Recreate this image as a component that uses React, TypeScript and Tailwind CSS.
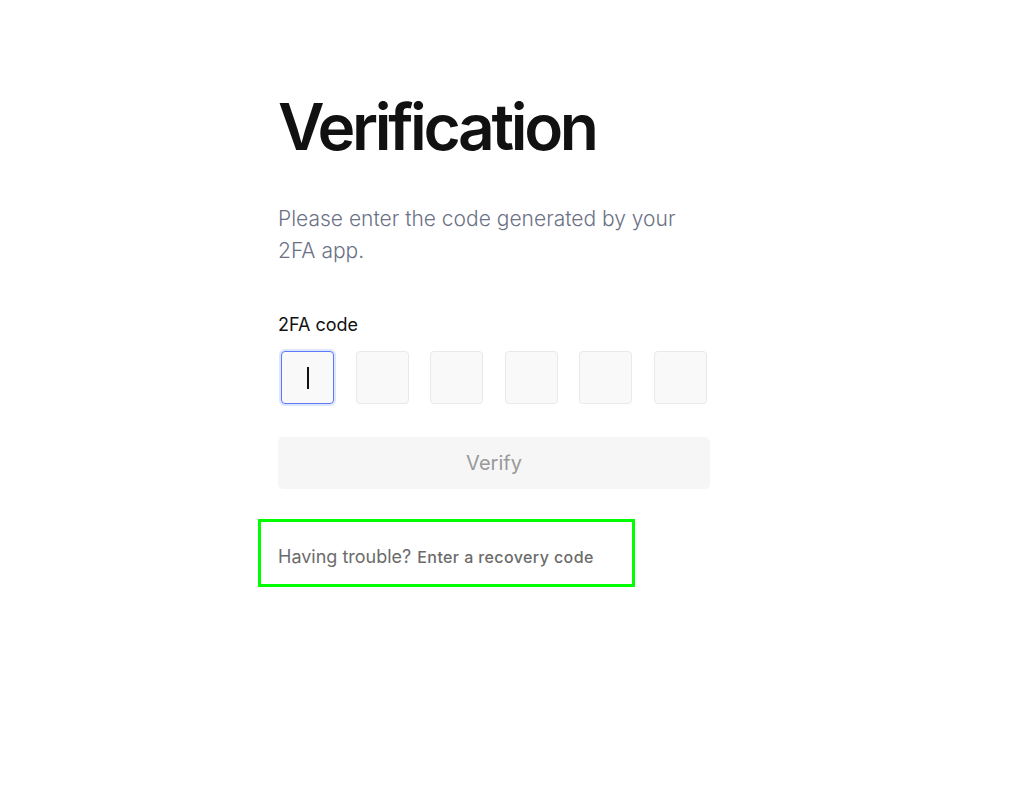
import React from "react";

const inter = { fontFamily: "Inter, 'Noto Sans', sans-serif" };

const CodeBox = ({ active }: { active?: boolean }) => (
  <div
    className={
      active
        ? "w-[53px] h-[53px] rounded-[4px] bg-[#f9f9f9] border border-[#5b7bf8] ring-2 ring-[#5b7bf8]/20 flex items-center justify-center"
        : "w-[53px] h-[53px] rounded-[4px] bg-[#f9f9f9] border border-[#e9e9e9]"
    }
  >
    {active && <span className="block w-[2px] h-[22px] bg-[#111]" />}
  </div>
);

const App: React.FC = () => {
  return (
    <div className="min-h-[790px] bg-white" style={inter}>
      <div className="ml-[278px] w-[432px] pt-[95px]">
        <h1 className="text-[64px] leading-[64px] font-semibold tracking-[-0.052em] text-[#111]">
          Verification
        </h1>
        <p className="mt-[44px] text-[21px] leading-[32px] font-light text-[#6b7285]">
          Please enter the code generated by your 2FA app.
        </p>
        <label className="block mt-[44px] text-[18px] leading-[28px] text-[#111]">
          2FA code
        </label>
        <div className="mt-[12px] flex justify-between px-[3px]">
          <CodeBox active />
          <CodeBox />
          <CodeBox />
          <CodeBox />
          <CodeBox />
          <CodeBox />
        </div>
        <button className="mt-[33px] w-full h-[52px] rounded-[5px] bg-[#f6f6f6] text-[20px] text-[#999]">
          Verify
        </button>
        <div className="mt-[30px] -ml-5 w-[377px] h-[68px] border-[3px] border-[#00ff00] px-[17px] flex items-center">
          <span className="text-[18px] text-[#6b6b6b] pt-[7px]">Having trouble?</span>
          <button className="ml-[6px] text-[16px] font-medium tracking-wide text-[#6b6b6b] pt-[8px]">
            Enter a recovery code
          </button>
        </div>
      </div>
    </div>
  );
};

export default App;
